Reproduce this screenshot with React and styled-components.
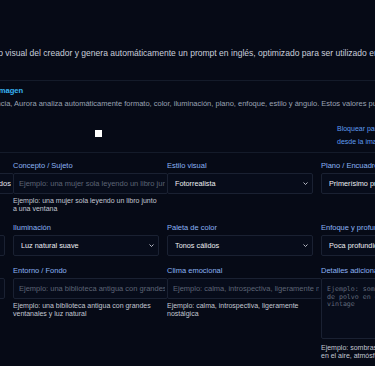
import styled, { createGlobalStyle } from 'styled-components';

const GlobalStyle = createGlobalStyle`
  html,
  body {
    margin: 0;
    padding: 0;
    background: #060a16;
  }

  body {
    font-family: 'Liberation Sans', Arial, sans-serif;
    color: #c9cedb;
    overflow: hidden;
  }
`;

const chevron =
  "url(\"data:image/svg+xml,%3Csvg xmlns='http://www.w3.org/2000/svg' width='5' height='3' viewBox='0 0 10 6'%3E%3Cpath d='M1 1l4 4 4-4' fill='none' stroke='%23c8ccd6' stroke-width='1.8'/%3E%3C/svg%3E\")";

const Viewport = styled.div`
  width: 100%;
  height: 366px;
  overflow: hidden;
`;

const Page = styled.main`
  width: 608px;
  margin-left: -141px;
  padding-top: 48px;
`;

const Intro = styled.p`
  margin: 0;
  font-size: 8.55px;
  line-height: 10px;
  white-space: nowrap;
  color: #c9cedb;
`;

const Divider = styled.hr`
  border: 0;
  border-top: 1px solid #141b2a;
  margin: ${(p) => p.$top}px 0 0;
`;

const SectionTitle = styled.h2`
  margin: 5px 0 0;
  font-size: 7.6px;
  line-height: 10px;
  font-weight: 700;
  color: #38b4f2;
  white-space: nowrap;
`;

const SectionText = styled.p`
  margin: 3px 0 0;
  font-size: 7.5px;
  line-height: 10px;
  color: #9aa2b3;
  white-space: nowrap;
`;

const LockRow = styled.div`
  margin-top: 13px;
  display: flex;
  align-items: center;
  height: 26px;
`;

const CheckSlot = styled.label`
  flex: 1;
  display: flex;
  justify-content: center;
  padding-bottom: 4px;

  span {
    width: 7px;
    height: 7px;
    background: #fff;
  }
`;

const LockLabel = styled.div`
  width: 130px;
  font-size: 7px;
  line-height: 13px;
  color: #5f9cf0;

  span {
    display: block;
    max-width: 75px;
  }
`;

const Grid = styled.div`
  padding-top: 8px;
  display: grid;
  grid-template-columns: repeat(4, 146px);
  column-gap: 8px;
  row-gap: 10px;
`;

const Field = styled.div`
  display: flex;
  flex-direction: column;
  min-width: 0;
`;

const Label = styled.label`
  font-size: 7.5px;
  line-height: 10px;
  color: #8ab2f4;
  margin-bottom: 2px;
  white-space: nowrap;
`;

const TextInput = styled.input`
  box-sizing: content-box;
  width: 100%;
  height: 19px;
  padding: 0 2px 0 5px;
  border: 1px solid #1a2132;
  border-radius: 2px;
  background: #070c1a;
  color: #e4e7ee;
  font-family: inherit;
  font-size: 7.5px;
  outline: none;

  &::placeholder {
    color: #5d6475;
  }
`;

const Select = styled.select`
  appearance: none;
  box-sizing: border-box;
  width: 100%;
  height: 21px;
  padding: 0 14px 0 7px;
  border: 1px solid #1a2132;
  border-radius: 2px;
  background: #070c1a ${chevron} no-repeat right 4px center;
  color: #eceef3;
  font-family: inherit;
  font-size: 7.3px;
  outline: none;
`;

const TextArea = styled.textarea`
  box-sizing: content-box;
  width: 100%;
  height: 45px;
  padding: 7px 5px;
  margin: 0 0 2px;
  border: 1px solid #1a2132;
  border-radius: 2px;
  background: #070c1a;
  color: #e4e7ee;
  font-family: 'DejaVu Sans Mono', monospace;
  font-size: 6.6px;
  line-height: 7.6px;
  resize: none;
  outline: none;

  &::placeholder {
    color: #626a7b;
  }
`;

const Hint = styled.p`
  margin: 3px 0 0;
  font-size: 7px;
  line-height: 8px;
  color: #c2c7d2;
`;

const fields = [
  { label: 'Referencia principal', type: 'input', value: 'Retratos íntimo, colores suaves y apagados' },
  {
    label: 'Concepto / Sujeto',
    type: 'input',
    placeholder: 'Ejemplo: una mujer sola leyendo un libro junto a una ventana',
    hint: 'Ejemplo: una mujer sola leyendo un libro junto a una ventana',
  },
  { label: 'Estilo visual', type: 'select', value: 'Fotorrealista' },
  { label: 'Plano / Encuadre', type: 'select', value: 'Primerísimo primer plano' },
  { label: 'Composición', type: 'select', value: 'Regla de tercios' },
  { label: 'Iluminación', type: 'select', value: 'Luz natural suave' },
  { label: 'Paleta de color', type: 'select', value: 'Tonos cálidos' },
  { label: 'Enfoque y profundidad', type: 'select', value: 'Poca profundidad de campo' },
  { label: 'Ángulo de cámara', type: 'select', value: 'A la altura de los ojos' },
  {
    label: 'Entorno / Fondo',
    type: 'input',
    placeholder: 'Ejemplo: una biblioteca antigua con grandes ventanales y luz natural',
    hint: 'Ejemplo: una biblioteca antigua con grandes ventanales y luz natural',
  },
  {
    label: 'Clima emocional',
    type: 'input',
    placeholder: 'Ejemplo: calma, introspectiva, ligeramente nostálgica',
    hint: 'Ejemplo: calma, introspectiva, ligeramente nostálgica',
  },
  {
    label: 'Detalles adicionales',
    type: 'textarea',
    placeholder: 'Ejemplo: sombras suaves, partículas de polvo en el aire, atmósfera vintage',
    hint: 'Ejemplo: sombras suaves, partículas de polvo en el aire, atmósfera vintage',
  },
];

const Control = ({ type, value, placeholder }) => {
  if (type === 'select') {
    return (
      <Select defaultValue={value}>
        <option>{value}</option>
      </Select>
    );
  }
  if (type === 'textarea') {
    return <TextArea placeholder={placeholder} />;
  }
  return <TextInput type="text" defaultValue={value} placeholder={placeholder} />;
};

const App = () => {
  return (
    <Viewport>
      <GlobalStyle />
      <Page>
        <Intro>
          Aurora interpreta su imagen y el estilo visual del creador y genera automáticamente un
          prompt en inglés, optimizado para ser utilizado en Midjourney.
        </Intro>
        <Divider $top={22} />
        <SectionTitle>Parámetros visuales detectados en la imagen</SectionTitle>
        <SectionText>
          Cuando se carga una fotografía de referencia, Aurora analiza automáticamente formato, color,
          iluminación, plano, enfoque, estilo y ángulo. Estos valores pueden ajustarse.
        </SectionText>
        <LockRow>
          <CheckSlot>
            <span />
          </CheckSlot>
          <LockLabel>
            <span>Bloquear parámetros desde la imagen</span>
          </LockLabel>
        </LockRow>
        <Divider $top={4} />
        <Grid>
          {fields.map((f) => (
            <Field key={f.label}>
              <Label>{f.label}</Label>
              <Control {...f} />
              {f.hint && <Hint>{f.hint}</Hint>}
            </Field>
          ))}
        </Grid>
      </Page>
    </Viewport>
  );
};

export default App;
